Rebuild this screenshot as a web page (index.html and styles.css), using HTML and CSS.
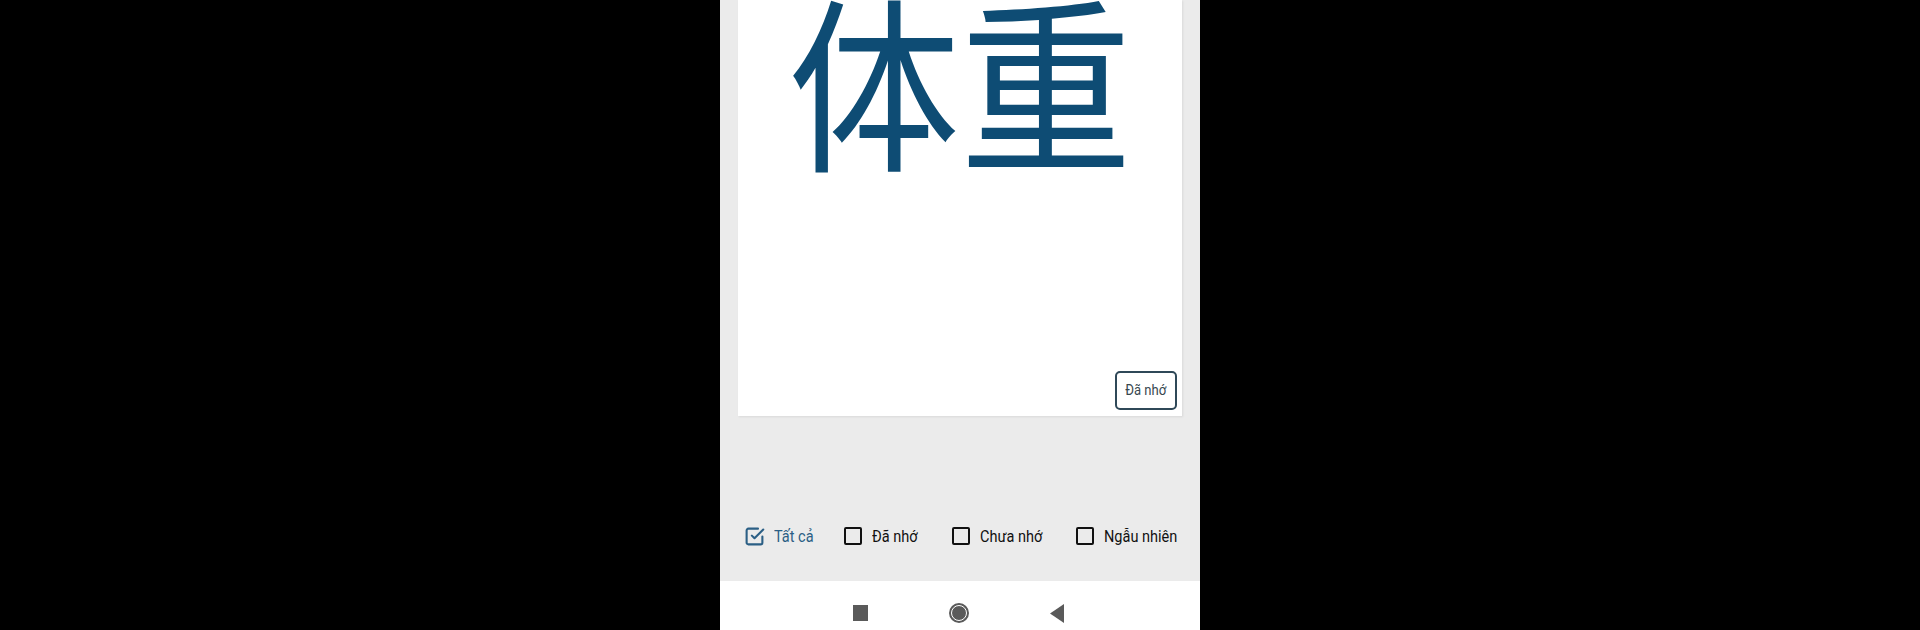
FILE: index.html
```html
<!DOCTYPE html>
<html lang="vi">
<head>
<meta charset="utf-8">
<title>体重</title>
<link rel="stylesheet" href="styles.css">
</head>
<body>
<div class="screen">
  <main class="content">
    <section class="card">
      <div class="kanji">体重</div>
      <button class="remember-btn"><span class="btn-text">Đã nhớ</span></button>
    </section>
    <div class="filters">
      <label class="filter filter-active">
        <svg class="cb" viewBox="0 0 24 24" fill="none" stroke="currentColor" stroke-width="2.4" stroke-linecap="round" stroke-linejoin="round">
          <polyline points="9 11 12 14 22 4"/>
          <path d="M21 12v7a2 2 0 0 1-2 2H5a2 2 0 0 1-2-2V5a2 2 0 0 1 2-2h11"/>
        </svg>
        <span class="label">Tất cả</span>
      </label>
      <label class="filter">
        <span class="box"></span>
        <span class="label">Đã nhớ</span>
      </label>
      <label class="filter">
        <span class="box"></span>
        <span class="label">Chưa nhớ</span>
      </label>
      <label class="filter">
        <span class="box"></span>
        <span class="label">Ngẫu nhiên</span>
      </label>
    </div>
  </main>
  <nav class="navbar">
    <span class="nav-recent"></span>
    <span class="nav-home"></span>
    <svg class="nav-back" viewBox="0 0 14 19"><polygon points="14,0 14,19 0,9.5" fill="#5a5a5a"/></svg>
  </nav>
</div>
</body>
</html>
```
FILE: styles.css
```css
html, body {
  margin: 0;
  padding: 0;
  background: #000;
  height: 100%;
  overflow: hidden;
}
body {
  display: flex;
  justify-content: center;
  align-items: flex-start;
  font-family: Roboto, "Noto Sans", sans-serif;
}
.screen {
  width: 480px;
  height: 645px;
  flex: none;
  display: flex;
  flex-direction: column;
  background: #ebebeb;
}
.content {
  flex: 1;
  display: flex;
  flex-direction: column;
  padding: 0 18px;
}
.card {
  height: 416px;
  background: #fff;
  box-shadow: 1px 1px 2px rgba(0,0,0,0.08);
  display: flex;
  flex-direction: column;
  justify-content: space-between;
  align-items: center;
  overflow: hidden;
}
.kanji {
  font-family: "Noto Sans CJK JP", "Noto Sans CJK SC", sans-serif;
  font-size: 187px;
  line-height: 1;
  color: #0e4c74;
  margin-top: -17px;
  transform: scaleX(0.92);
  white-space: nowrap;
}
.remember-btn {
  align-self: flex-end;
  margin: 0 5px 6px 0;
  width: 62px;
  height: 39px;
  border: 2px solid #2f4858;
  border-radius: 5px;
  background: #fff;
  font-family: Roboto, sans-serif;
  font-size: 14.5px;
  color: #37474f;
  padding: 0;
  display: flex;
  align-items: center;
  justify-content: center;
}
.btn-text {
  display: inline-block;
  transform: scaleX(0.9);
  white-space: nowrap;
}
.filters {
  margin-top: auto;
  margin-bottom: 33px;
  margin-left: 8px;
  height: 24px;
  display: grid;
  grid-template-columns: 98px 108px 124px 1fr;
  align-items: center;
}
.filter {
  display: flex;
  align-items: center;
  gap: 10px;
  font-size: 16.5px;
  color: #111;
}
.label {
  display: inline-block;
  transform: scaleX(0.88);
  transform-origin: left center;
  white-space: nowrap;
}
.filter-active {
  color: #2b5f85;
}
.cb {
  width: 21px;
  height: 21px;
  margin-left: -2px;
  margin-right: -1px;
}
.box {
  width: 14px;
  height: 14px;
  border: 2px solid #111;
  border-radius: 2px;
  flex: none;
}
.navbar {
  height: 64px;
  flex: none;
  background: #fff;
  display: flex;
  align-items: center;
  padding-left: 133px;
}
.nav-recent {
  width: 15px;
  height: 16px;
  background: #5a5a5a;
  margin-right: 83px;
}
.nav-home {
  width: 14px;
  height: 14px;
  border-radius: 50%;
  background: #5a5a5a;
  border: 1.5px solid #fff;
  box-shadow: 0 0 0 2px #5a5a5a;
  margin-right: 83px;
}
.nav-back {
  width: 14px;
  height: 19px;
}
```
